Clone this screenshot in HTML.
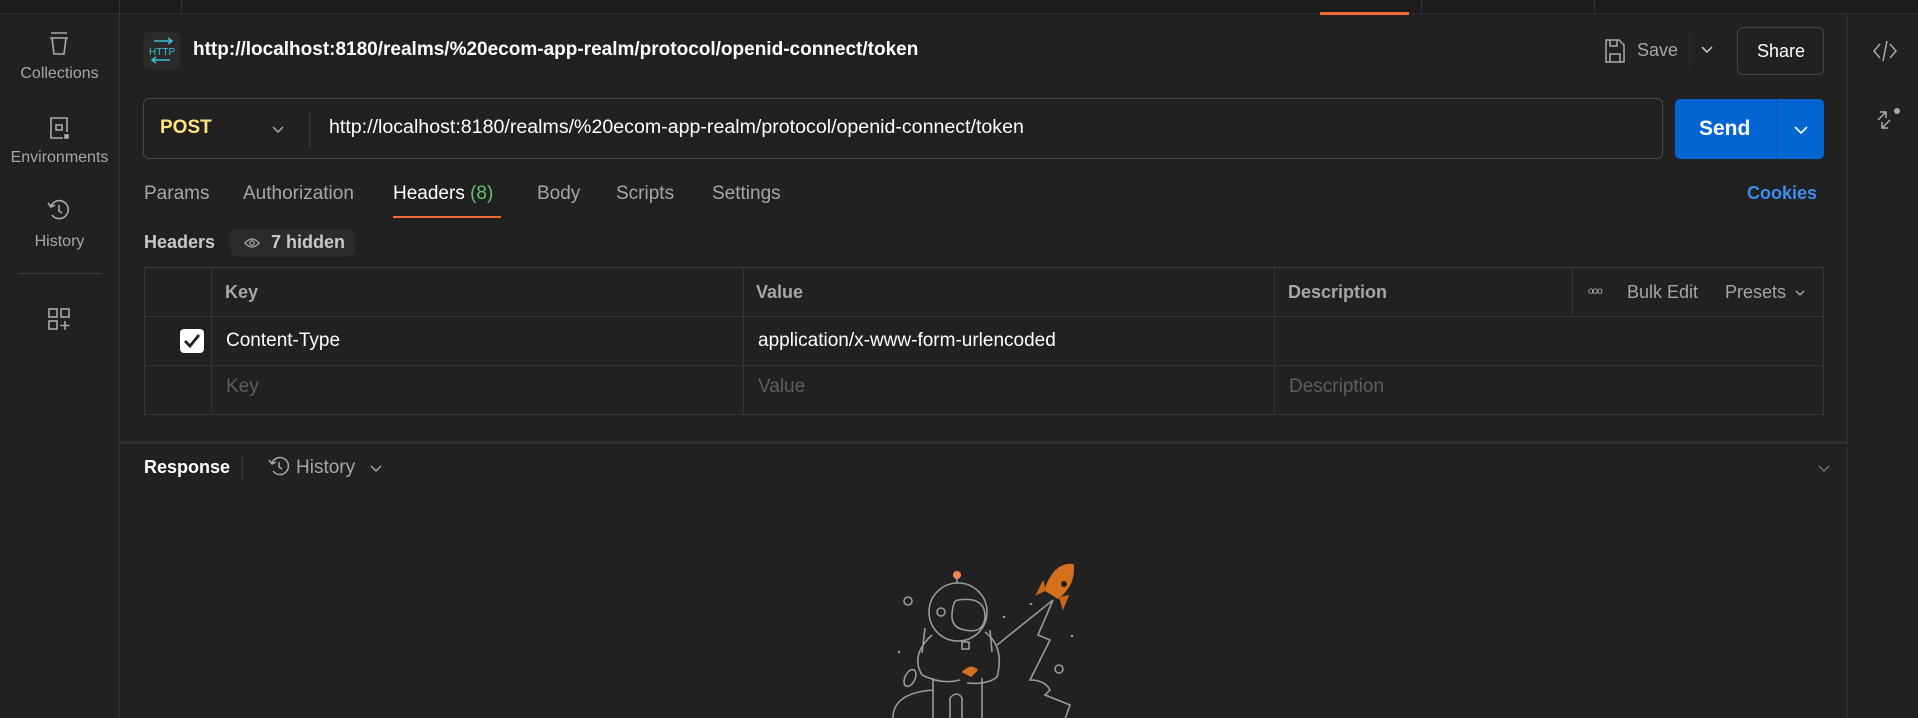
<!DOCTYPE html>
<html><head><meta charset="utf-8"><style>
*{box-sizing:border-box;margin:0;padding:0}
body{width:1918px;height:718px;background:#212121;font-family:"Liberation Sans",sans-serif;color:#e6e6e6;position:relative;overflow:hidden}
.a{position:absolute}
.t{position:absolute;white-space:nowrap}
.sb{font-size:16px;color:#a6a6a6;text-align:center;width:119px;left:0}
.tab{font-size:19px;color:#a6a6a6;top:183px}
.th{font-size:18px;color:#a6a6a6;font-weight:bold}
.vl{position:absolute;width:1px;background:#333}
.hl{position:absolute;height:1px;background:#333}
svg{position:absolute;overflow:visible}
</style></head><body>
<div class="a" style="left:0;top:0;width:1918px;height:14px;background:#1c1c1c;border-bottom:1px solid #2e2e2e"></div>
<div class="vl" style="left:119px;top:0;height:14px"></div>
<div class="vl" style="left:181px;top:0;height:14px"></div>
<div class="vl" style="left:1421px;top:0;height:14px"></div>
<div class="vl" style="left:1594px;top:0;height:14px"></div>
<div class="a" style="left:1320px;top:12px;width:89px;height:3px;background:#f26b3a"></div>
<div class="vl" style="left:119px;top:14px;height:704px;background:#2e2e2e"></div>
<div class="vl" style="left:1847px;top:14px;height:704px;background:#2e2e2e"></div>

<!-- sidebar -->
<svg style="left:48px;top:32px" width="22" height="24" fill="none" stroke="#aaa" stroke-width="1.6"><path d="M3 1h16M2 6h18M4 6l2 16h10l2-16"/></svg>
<div class="t sb" style="top:65px">Collections</div>
<svg style="left:48px;top:116px" width="22" height="24" fill="none" stroke="#aaa" stroke-width="1.6"><path d="M19 16V2H3v20h12"/><rect x="8" y="9" width="6" height="5"/><rect x="17" y="19" width="3" height="3" fill="#aaa"/></svg>
<div class="t sb" style="top:149px">Environments</div>
<svg style="left:47px;top:198px" width="24" height="24" fill="none" stroke="#aaa" stroke-width="1.6"><path d="M4 8a9 9 0 1 1 1 9M1 5l3 4 4-2M12 7v6l3 2"/></svg>
<div class="t sb" style="top:233px">History</div>
<div class="hl" style="left:18px;top:273px;width:84px;background:#3a3a3a"></div>
<svg style="left:48px;top:308px" width="24" height="24" fill="none" stroke="#aaa" stroke-width="1.6"><rect x="1" y="1" width="8" height="8"/><rect x="13" y="1" width="8" height="8"/><rect x="1" y="13" width="8" height="8"/><path d="M17 13v9M12.5 17.5h9"/></svg>

<!-- title -->
<div class="a" style="left:143px;top:32px;width:37px;height:37px;background:#2a2a2a;border-radius:6px"></div>
<svg style="left:148px;top:38px" width="28" height="26" fill="none" stroke="#3fbfd6" stroke-width="1.5"><path d="M6 3h18M20 0l4 3-4 3M4 22h18M8 19l-4 3 4 3"/><text x="1" y="17" font-size="10" fill="#3fbfd6" stroke="none" font-family="Liberation Sans">HTTP</text></svg>
<div class="t" style="left:193px;top:39px;font-size:19px;font-weight:bold;color:#fff">http://localhost:8180/realms/%20ecom-app-realm/protocol/openid-connect/token</div>
<svg style="left:1605px;top:39px" width="20" height="24" fill="none" stroke="#aaa" stroke-width="1.5"><path d="M1 1h13l5 5v17H1z"/><path d="M5 1v6h7V1M5 23v-8h10v8"/></svg>
<div class="t" style="left:1637px;top:40px;font-size:18px;color:#a6a6a6">Save</div>
<div class="vl" style="left:1689px;top:30px;height:40px;background:#2e2e2e"></div>
<svg style="left:1701px;top:46px" width="12" height="8" fill="none" stroke="#ccc" stroke-width="1.5"><path d="M1 1l5 5 5-5"/></svg>
<div class="a" style="left:1737px;top:27px;width:87px;height:48px;border:1px solid #444;border-radius:6px"></div>
<div class="t" style="left:1757px;top:41px;font-size:18px;color:#fff">Share</div>
<svg style="left:1873px;top:40px" width="24" height="22" fill="none" stroke="#aaa" stroke-width="1.5"><path d="M7 4L1 11l6 7M17 4l6 7-6 7M14 1L10 21"/></svg>
<svg style="left:1876px;top:108px" width="26" height="26" fill="none" stroke="#aaa" stroke-width="1.5"><path d="M2 12l8-8M4 4h6v6M14 12l-8 8M6 14v6h6"/><circle cx="21" cy="3" r="3" fill="#aaa" stroke="none"/></svg>

<!-- url bar -->
<div class="a" style="left:143px;top:98px;width:1520px;height:61px;border:1px solid #4a4a4a;border-radius:6px"></div>
<div class="t" style="left:160px;top:117px;font-size:19px;font-weight:bold;color:#ffe47e">POST</div>
<svg style="left:272px;top:126px" width="12" height="8" fill="none" stroke="#aaa" stroke-width="1.5"><path d="M1 1l5 5 5-5"/></svg>
<div class="vl" style="left:309px;top:110px;height:38px;background:#3a3a3a"></div>
<div class="t" style="left:329px;top:116px;font-size:19.6px;color:#fff">http://localhost:8180/realms/%20ecom-app-realm/protocol/openid-connect/token</div>
<div class="a" style="left:1675px;top:99px;width:149px;height:60px;background:#0265d2;border-radius:5px"></div>
<div class="vl" style="left:1776px;top:99px;height:60px;background:#0a56b0"></div>
<div class="t" style="left:1699px;top:117px;font-size:21px;font-weight:bold;color:#fff">Send</div>
<svg style="left:1794px;top:126px" width="14" height="8" fill="none" stroke="#fff" stroke-width="1.6"><path d="M1 1l6 6 6-6"/></svg>

<!-- tabs -->
<div class="t tab" style="left:144px">Params</div>
<div class="t tab" style="left:243px">Authorization</div>
<div class="t tab" style="left:393px;color:#fff">Headers <span style="color:#5fc46a">(8)</span></div>
<div class="t tab" style="left:537px">Body</div>
<div class="t tab" style="left:616px">Scripts</div>
<div class="t tab" style="left:712px">Settings</div>
<div class="a" style="left:393px;top:216px;width:108px;height:2px;background:#f26b3a"></div>
<div class="t" style="left:1747px;top:183px;font-size:18px;font-weight:bold;color:#3b8ef0">Cookies</div>

<div class="t" style="left:144px;top:232px;font-size:18px;font-weight:bold;color:#c8c8c8">Headers</div>
<div class="a" style="left:230px;top:229px;width:125px;height:28px;background:#2a2a2a;border-radius:8px"></div>
<svg style="left:244px;top:237px" width="16" height="12" fill="none" stroke="#999" stroke-width="1.4"><path d="M1 6q7-8 14 0q-7 8-14 0z"/><circle cx="8" cy="6" r="2.2"/></svg>
<div class="t" style="left:271px;top:232px;font-size:18px;font-weight:bold;color:#c8c8c8">7 hidden</div>

<!-- table -->
<div class="a" style="left:144px;top:267px;width:1680px;height:148px;border:1px solid #353535"></div>
<div class="hl" style="left:144px;top:316px;width:1680px"></div>
<div class="hl" style="left:144px;top:365px;width:1680px"></div>
<div class="vl" style="left:211px;top:267px;height:148px"></div>
<div class="vl" style="left:743px;top:267px;height:148px"></div>
<div class="vl" style="left:1274px;top:267px;height:148px"></div>
<div class="vl" style="left:1572px;top:267px;height:49px"></div>
<div class="t th" style="left:225px;top:282px">Key</div>
<div class="t th" style="left:756px;top:282px">Value</div>
<div class="t th" style="left:1288px;top:282px">Description</div>
<div class="t" style="left:1588px;top:286px;font-size:10px;color:#aaa;letter-spacing:-1px">ooo</div>
<div class="t" style="left:1627px;top:282px;font-size:18px;color:#a6a6a6">Bulk Edit</div>
<div class="t" style="left:1725px;top:282px;font-size:18px;color:#a6a6a6">Presets</div>
<svg style="left:1795px;top:290px" width="10" height="6" fill="none" stroke="#aaa" stroke-width="1.3"><path d="M1 1l4 4 4-4"/></svg>
<div class="a" style="left:180px;top:329px;width:24px;height:24px;background:#fff;border-radius:4px"></div>
<svg style="left:183px;top:333px" width="18" height="16" fill="none" stroke="#212121" stroke-width="2.8"><path d="M2 8l5 5L16 2"/></svg>
<div class="t" style="left:226px;top:330px;font-size:19px;color:#fff">Content-Type</div>
<div class="t" style="left:758px;top:330px;font-size:19px;color:#fff">application/x-www-form-urlencoded</div>
<div class="t" style="left:226px;top:376px;font-size:19px;color:#5e5e5e">Key</div>
<div class="t" style="left:758px;top:376px;font-size:19px;color:#5e5e5e">Value</div>
<div class="t" style="left:1289px;top:376px;font-size:19px;color:#5e5e5e">Description</div>

<!-- response -->
<div class="a" style="left:120px;top:441px;width:1727px;height:3px;background:#2e2e2e"></div>
<div class="t" style="left:144px;top:457px;font-size:18px;font-weight:bold;color:#fff">Response</div>
<div class="vl" style="left:242px;top:456px;height:24px;background:#3a3a3a"></div>
<svg style="left:268px;top:456px" width="22" height="22" fill="none" stroke="#aaa" stroke-width="1.5"><path d="M4 7a8.5 8.5 0 1 1 1 8M1 4l3 4 4-2M11 6v5l3 2"/></svg>
<div class="t" style="left:296px;top:457px;font-size:19px;color:#a6a6a6">History</div>
<svg style="left:370px;top:465px" width="12" height="8" fill="none" stroke="#aaa" stroke-width="1.4"><path d="M1 1l5 5 5-5"/></svg>
<svg style="left:1818px;top:465px" width="12" height="8" fill="none" stroke="#777" stroke-width="1.4"><path d="M1 1l5 5 5-5"/></svg>

<!-- illustration -->
<svg style="left:860px;top:560px" width="260" height="158" fill="none" stroke="#9a9a9a" stroke-width="1.6">
<circle cx="97" cy="15" r="4" fill="#f4844c" stroke="none"/>
<path d="M97 19v4"/>
<circle cx="98" cy="52" r="29"/>
<path d="M98 40q28-4 27 18q-2 16-20 12q-14-2-13-16q1-14 6-14z"/>
<circle cx="81" cy="52" r="4"/>
<circle cx="48" cy="41" r="4"/><circle cx="199" cy="109" r="4"/>
<path d="M72 75q-22 20-10 40q20 10 38 5M125 72q20 15 12 45q-10 8-30 6"/>
<path d="M65 68l-3 25M130 70l2 22"/>
<rect x="102" y="82" width="7" height="7"/>
<path d="M73 118v40M122 118v40M90 158v-20q7-8 12 0v20"/>
<path d="M137 85l56-45M193 40l-15 35 12 5-20 40q15 0 20 10l-5 5 25 10-10 28h18"/>
<path d="M33 158q0-25 40-28"/>
<ellipse cx="50" cy="118" rx="5" ry="9" transform="rotate(25 50 118)"/>
<path d="M38 92h2M171 43v2M144 56v2M212 75v2" stroke-width="2.5"/>
<path d="M185 30q10-28 28-25q2 20-15 33z" fill="#d6701c" stroke="#d6701c"/>
<path d="M185 30l-8 4 6-12z M200 38l3 10 5-12z" fill="#c9661a" stroke="#c9661a"/>
<circle cx="204" cy="24" r="3" fill="#212121" stroke="none"/>
<path d="M103 112q8-8 14-2l-6 6z" fill="#d6701c" stroke="#d6701c"/>
</svg>
</body></html>
